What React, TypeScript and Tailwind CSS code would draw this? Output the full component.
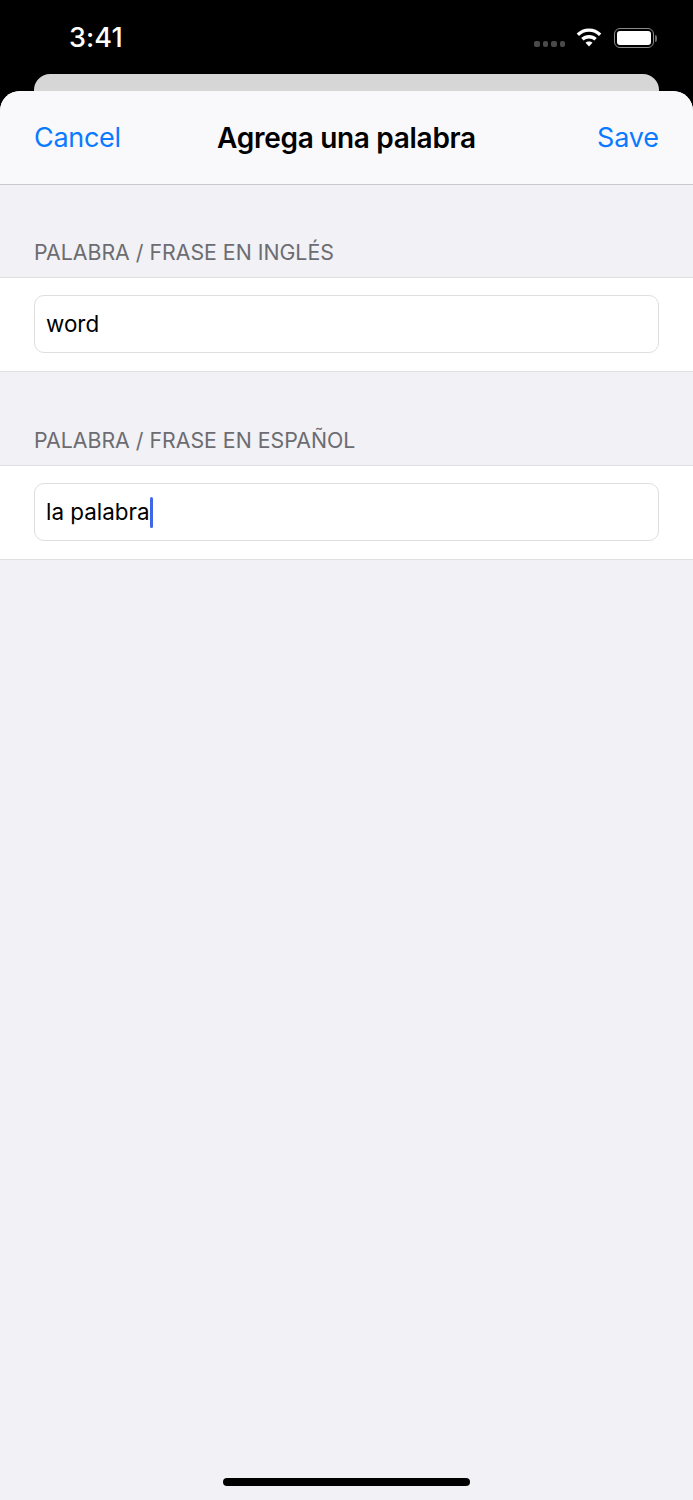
const FONT = "font-['Inter','Liberation_Sans',sans-serif]";

function StatusBar() {
  return (
    <div className="flex h-[74px] items-start justify-between bg-black pl-[69px] pr-[36px] pt-[22px]">
      <span className="text-[27px] font-medium leading-[32px] tracking-[0.1px] text-white">3:41</span>
      <div className="flex items-center pt-[6px]">
        <div className="mr-[11px] mt-[11px] flex gap-[3px]">
          {[0, 1, 2, 3].map((i) => (
            <span key={i} className="h-[6px] w-[5.5px] rounded-[2px] bg-[#4a4a4a]" />
          ))}
        </div>
        <svg width="26" height="20" viewBox="0 0 26 20" className="mr-[12px]">
          <path d="M13 0.5C8.2 0.5 3.9 2.4 0.7 5.5L3 7.9C5.6 5.4 9.1 3.8 13 3.8C16.9 3.8 20.4 5.4 23 7.9L25.3 5.5C22.1 2.4 17.8 0.5 13 0.5Z" fill="#fff" />
          <path d="M13 7C10 7 7.3 8.2 5.2 10.1L7.6 12.5C9 11.2 10.9 10.4 13 10.4C15.1 10.4 17 11.2 18.4 12.5L20.8 10.1C18.7 8.2 16 7 13 7Z" fill="#fff" />
          <path d="M13 13.4C11.6 13.4 10.4 13.9 9.5 14.8L13 18.6L16.5 14.8C15.6 13.9 14.4 13.4 13 13.4Z" fill="#fff" />
        </svg>
        <div className="flex items-center">
          <div className="flex h-[20px] w-[40px] items-center justify-center rounded-[6px] border-[1.5px] border-[#8a8a8a]">
            <div className="h-[14px] w-[34px] rounded-[3px] bg-white" />
          </div>
          <div className="ml-[1px] h-[7px] w-[2px] rounded-r-[2px] bg-[#6e6e6e]" />
        </div>
      </div>
    </div>
  );
}

function Section({ title, value, caret }: { title: string; value: string; caret?: boolean }) {
  return (
    <section>
      <h2 className="px-[34px] pb-[12px] text-[21.3px] font-normal leading-[26px] text-[#6c6c71]">{title}</h2>
      <div className="border-y border-[#dfdfe2] bg-white px-[34px] pb-[18px] pt-[17px]">
        <div className="flex h-[58px] items-center rounded-[10px] border border-[#dedee0] bg-white pl-[11px] text-[22.4px] leading-[30px] text-black">
          <span>{value}</span>
          {caret && <span className="h-[31px] w-[3px] rounded-full bg-[#3f67e8]" />}
        </div>
      </div>
    </section>
  );
}

export default function App() {
  return (
    <div className={`relative flex h-[1500px] w-[693px] flex-col overflow-hidden bg-black ${FONT}`}>
      <StatusBar />
      <div className="mx-[34px] h-[30px] rounded-t-[16px] bg-[#d6d6d6]" />
      <div className="relative -mt-[13px] flex flex-1 flex-col overflow-hidden rounded-t-[20px] bg-[#f1f1f6]">
        <header className="grid h-[94px] grid-cols-[1fr_auto_1fr] items-center border-b border-[#c9c9cc] bg-[#f9f9fc] px-[34px]">
          <button className="justify-self-start text-[27px] leading-[34px] tracking-[-0.3px] text-[#0a7aff]">Cancel</button>
          <h1 className="text-[28px] font-semibold leading-[34px] tracking-[-0.3px] text-black">Agrega una palabra</h1>
          <button className="justify-self-end text-[27px] leading-[34px] tracking-[-0.1px] text-[#0a7aff]">Save</button>
        </header>
        <div className="flex flex-col gap-[55px] pt-[54px]">
          <Section title="PALABRA / FRASE EN INGLÉS" value="word" />
          <Section title="PALABRA / FRASE EN ESPAÑOL" value="la palabra" caret />
        </div>
        <div className="mt-auto flex justify-center pb-[14px]">
          <div className="h-[8px] w-[247px] rounded-full bg-black" />
        </div>
      </div>
    </div>
  );
}
